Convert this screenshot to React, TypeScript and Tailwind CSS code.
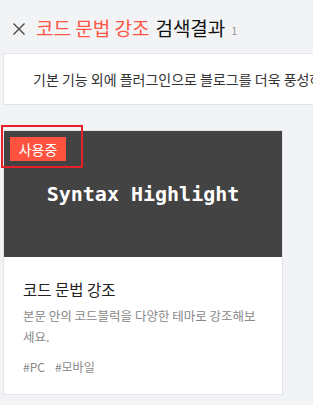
import React from "react";

export default function App() {
  return (
    <div
      className="relative w-[313px] h-[405px] overflow-hidden bg-[#f2f3f5]"
      style={{ fontFamily: '"Noto Sans CJK KR", "Noto Sans", sans-serif' }}
    >
      <div className="flex items-center h-[53px] pl-[12px] pt-[4px]">
        <svg width="14" height="14" viewBox="0 0 14 14" className="mr-[10px]">
          <path d="M1.5 1.5 L12.5 12.5 M12.5 1.5 L1.5 12.5" stroke="#444" strokeWidth="1.3" fill="none" />
        </svg>
        <span className="text-[19px] text-[#ff5544]">코드 문법 강조</span>
        <span className="text-[19px] text-[#111] ml-[6px]">검색결과</span>
        <span className="text-[11px] text-[#999] ml-[6px] mt-[4px]">1</span>
      </div>
      <div className="ml-[3px] h-[52px] bg-white border border-r-0 border-[#e1e4ea] flex items-center pl-[29px] whitespace-nowrap overflow-hidden">
        <span className="text-[14px] text-[#333]">기본 기능 외에 플러그인으로 블로그를 더욱 풍성하게</span>
      </div>
      <div className="ml-[3px] mt-[25px] w-[280px] bg-white border border-[#e1e4ea]">
        <div className="relative h-[126px] bg-[#434343] flex items-center justify-center">
          <span
            className="text-white text-[20px] font-bold"
            style={{ fontFamily: '"DejaVu Sans Mono", monospace' }}
          >
            Syntax Highlight
          </span>
          <div className="absolute left-[6px] top-[6px] w-[56px] h-[24px] bg-[#ff5340] flex items-center justify-center text-white text-[14px]">
            사용중
          </div>
        </div>
        <div className="px-[19px] pt-[20px] pb-[17px]">
          <div className="text-[15.5px] leading-[24px] text-[#222]">코드 문법 강조</div>
          <div className="mt-[4px] text-[12.5px] leading-[21px] text-[#888]">
            본문 안의 코드블럭을 다양한 테마로 강조해보세요.
          </div>
          <div className="mt-[10px] flex gap-[10px] text-[12px] leading-[20px] text-[#888]">
            <span>#PC</span>
            <span>#모바일</span>
          </div>
        </div>
      </div>
      <div className="absolute left-[1px] top-[125px] w-[82px] h-[43px] border-2 border-[#e8202a]" />
    </div>
  );
}
